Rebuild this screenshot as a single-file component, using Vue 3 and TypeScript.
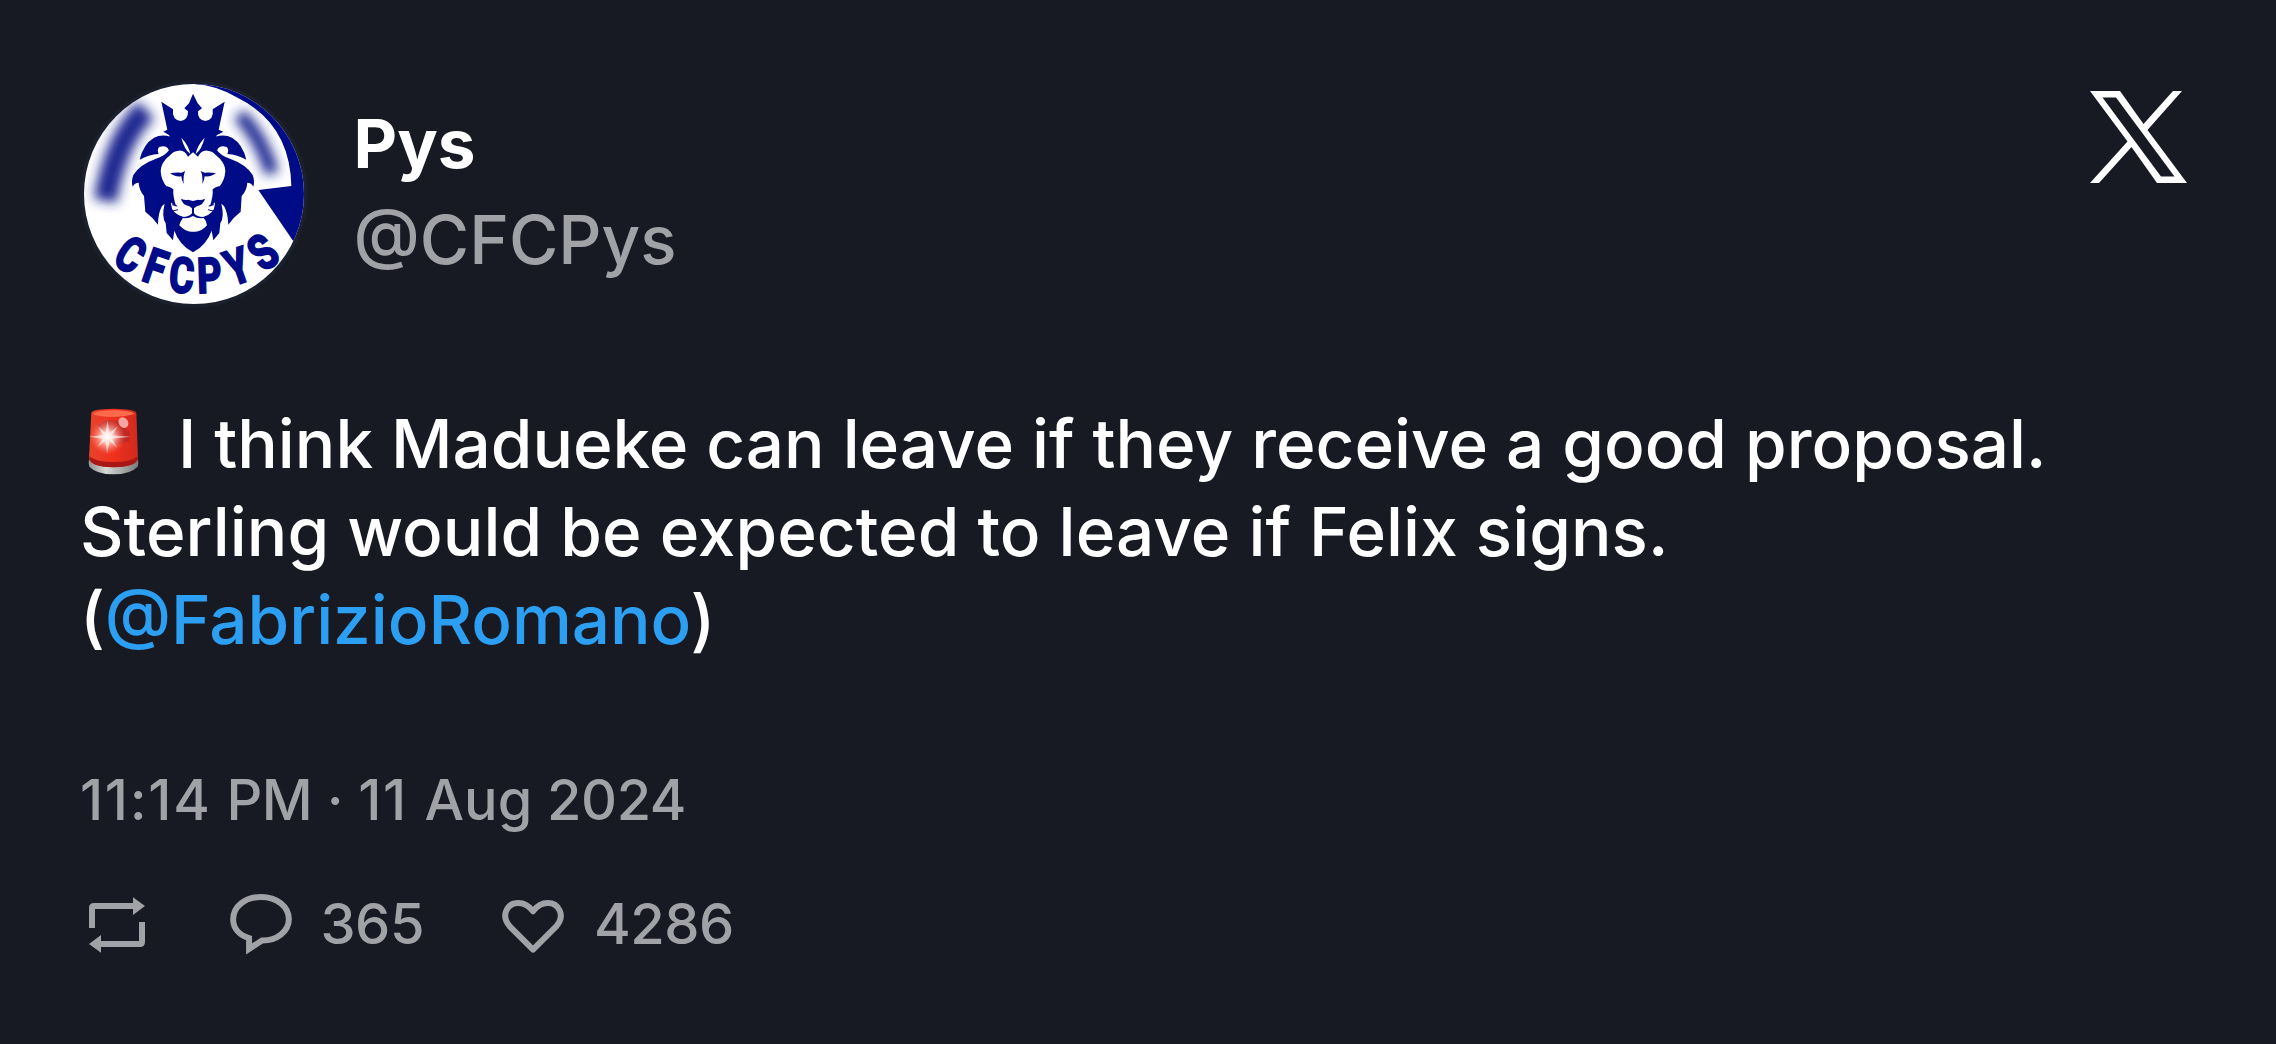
<script setup lang="ts">
interface BadgeLetter { ch: string; x: number; y: number; rot: number }

const badge: BadgeLetter[] = [
  { ch: 'C', x: 182, y: 553, rot: 33 },
  { ch: 'F', x: 257, y: 590, rot: 19 },
  { ch: 'C', x: 335, y: 615, rot: 5 },
  { ch: 'P', x: 418, y: 616, rot: -2 },
  { ch: 'Y', x: 502, y: 588, rot: -19 },
  { ch: 'S', x: 578, y: 546, rot: -36 },
]
</script>

<template>
  <article class="card">
    <header class="head">
      <svg class="avatar" viewBox="30 30 684 684">
        <defs>
          <clipPath id="disc"><circle cx="372" cy="372" r="330" /></clipPath>
          <filter id="soft" x="-60%" y="-50%" width="220%" height="200%"><feGaussianBlur stdDeviation="17" /></filter>
        </defs>
        <circle cx="372" cy="372" r="341" fill="#1a212c" />
        <g clip-path="url(#disc)">
          <rect x="30" y="30" width="684" height="684" fill="#fff" />
          <path d="M372 42 Q440 46 500 82 Q660 160 664 348 L565 360 L670 514 L720 500 L720 30 Z" fill="#000b88" />
          <g filter="url(#soft)" fill="none" stroke="#1c2890">
            <path d="M228 120 Q138 205 106 392" stroke-width="70" />
            <path d="M508 134 Q575 205 606 310" stroke-width="42" />
          </g>
          <g fill="#000b88">
            <!-- crown and brow -->
            <path d="M274 95 L309 118 Q305 150 332 153 Q355 150 354 124 L343 115 L357 100 L369 71 L383 100 L396 115 L384 124 Q382 150 406 153 Q432 150 428 118 L464 95 L446 179 L460 185 L440 196 L430 240 L308 240 L298 196 L280 185 L292 179 Z" />
            <!-- ears -->
            <path d="M209 269 Q220 222 252 203 Q274 192 302 200 L308 238 L296 240 Q290 224 268 231 Q260 238 266 252 Q236 254 209 269 Z" />
            <path d="M529 269 Q518 222 486 203 Q464 192 436 200 L430 238 L442 240 Q448 224 470 231 Q478 238 472 252 Q502 254 529 269 Z" />
            <!-- mane -->
            <path d="M300 236 Q288 256 258 266 Q208 284 190 315 Q183 334 188 350 Q194 338 206 338 Q208 362 222 378 L226 425 Q246 440 264 464 Q264 430 276 408 L284 401 Q274 440 287 460 L290 489 L309 511 L313 482 Q328 525 369 547 Q410 525 425 482 L430 511 L448 489 L451 460 Q464 440 454 401 L462 408 Q474 430 475 464 Q492 440 512 425 L515 378 Q530 362 532 338 Q544 338 550 350 Q555 334 548 315 Q530 284 480 266 Q450 256 438 236 L369 225 Z" />
          </g>
          <g fill="#fff">
            <!-- face -->
            <path d="M354 260 Q344 240 326 242 Q310 243 300 256 Q272 278 272 304 Q274 334 292 352 L303 360 L310 386 L303 402 Q305 432 341 441 Q329 458 328 466 Q350 489 369 485 Q391 489 411 466 Q408 450 399 441 Q433 432 435 402 L428 386 L435 360 L446 352 Q464 334 466 304 Q466 278 438 256 Q428 243 412 242 Q394 240 384 260 L369 247 Z" />
            <path d="M334 203 Q356 226 361 252 Q343 239 334 203 Z M404 203 Q382 226 377 252 Q395 239 404 203 Z" />
          </g>
          <g fill="#000b88">
            <!-- cheeks -->
            <path d="M290 348 Q304 352 310 358 Q308 380 319 410 Q304 402 298 386 Z M448 348 Q434 352 428 358 Q430 380 419 410 Q434 402 440 386 Z" />
            <!-- eyes -->
            <path d="M300 310 Q318 306 334 308 L346 303 Q339 314 341 342 Q335 332 334 319 Q314 321 300 310 Z M438 310 Q420 306 404 308 L392 303 Q399 314 397 342 Q403 332 404 319 Q424 321 438 310 Z" />
            <!-- nose and muzzle -->
            <path d="M333 386 Q346 392 354 389 L369 393 L384 389 Q392 392 405 386 Q402 403 380 409 L372 415 V430 Q385 445 412 440 Q390 451 369 438 Q348 451 326 440 Q353 445 366 430 V415 L358 409 Q336 403 333 386 Z" />
          </g>
          <path d="M306 404 L322 408 M308 423 L324 419 M432 404 L416 408 M430 423 L414 419" stroke="#000b88" stroke-width="3" />
          <text
            v-for="(l, i) in badge"
            :key="i"
            class="letter"
            :transform="`translate(${l.x} ${l.y}) rotate(${l.rot}) scale(.77 1)`"
            y="52"
          >{{ l.ch }}</text>
        </g>
      </svg>
      <div class="who">
        <div class="name">Pys</div>
        <div class="handle">@CFCPys</div>
      </div>
      <svg class="xlogo" viewBox="0 0 97 92">
        <path fill="#fff" fill-rule="evenodd" d="M0 0 H30 L53.500 33 L83 0 H92 L57.500 39 L97 92 H67 L41.500 56 L9 92 H0 L37.500 50.500 Z M12.500 6.500 L71 85.500 H84.500 L26 6.500 Z" />
      </svg>
    </header>

    <p class="body">
      <svg class="siren" viewBox="0 0 154 200">
        <defs>
          <linearGradient id="glass" x1="0" x2="1"><stop offset="0" stop-color="#e8432c" /><stop offset=".5" stop-color="#f0301c" /><stop offset="1" stop-color="#d02a1e" /></linearGradient>
          <linearGradient id="base" x1="0" x2="1"><stop offset="0" stop-color="#8f9392" /><stop offset=".35" stop-color="#d6d8d6" /><stop offset="1" stop-color="#777a7a" /></linearGradient>
          <radialGradient id="glow"><stop offset="0" stop-color="#fff" /><stop offset=".35" stop-color="#ffd5cc" stop-opacity=".85" /><stop offset="1" stop-color="#ff7765" stop-opacity="0" /></radialGradient>
        </defs>
        <path d="M4 148 Q0 165 4 176 Q26 199 77 199 Q128 199 150 176 Q154 165 150 148 Z" fill="url(#base)" />
        <path d="M10 14 Q12 2 77 1 Q142 2 146 14 L151 152 Q146 176 77 178 Q8 176 3 152 Z" fill="url(#glass)" />
        <path d="M5 145 Q25 162 77 162 Q129 162 149 145 L151 153 Q142 177 77 178 Q12 177 3 153 Z" fill="#a81716" />
        <path d="M14 17 Q25 6 77 6 Q129 6 141 17 Q110 26 77 26 Q35 26 14 17 Z" fill="#ff6b4b" />
        <path d="M30 50 Q60 25 98 42 L126 72 L124 98 L92 108 Q50 110 30 50 Z" fill="#a8272a" opacity=".6" />
        <ellipse cx="107" cy="43" rx="14" ry="17" fill="#f6a4a0" transform="rotate(-35 107 43)" />
        <circle cx="59" cy="86" r="54" fill="url(#glow)" />
        <path d="M59 36 L65 74 L90 54 L73 81 L128 86 L73 92 L88 119 L65 98 L58 137 L52 98 L28 117 L45 92 L3 86 L45 80 L31 55 L53 74 Z" fill="#fff" opacity=".6" />
      </svg><span class="l1">I think Madueke can leave if they receive a good proposal.</span><br />
      <span class="l2">Sterling would be expected to leave if Felix signs.</span><br />
      <span>(<span class="mention">@FabrizioRomano</span>)</span>
    </p>

    <div class="time"><span class="ones">11:14</span> <span class="pm">PM ·</span> <span class="ones">11 </span><span>Aug </span><span class="pm">2024</span></div>

    <footer class="stats">
      <svg class="rt" viewBox="0 0 168 166" fill="#a1a2a6">
        <path d="M0 92 V32 Q0 17 15 17 H132 V0 L168 26 L132 53 V35 H18 V92 Z" />
        <path d="M168 74 V134 Q168 149 153 149 H36 V166 L0 140 L36 113 V131 H150 V74 Z" />
      </svg>
      <svg class="reply" viewBox="0 0 186 187">
        <path d="M57 133 C28 124 9 104 9 76 C9 38 45 9 93 9 C141 9 177 38 177 76 C177 113 140 141 96 140 L57 166 Z" fill="none" stroke="#a1a2a6" stroke-width="18" />
      </svg>
      <span class="n1">365</span>
      <svg class="heart" viewBox="0 0 186 162">
        <path d="M93 149 L24 80 C-6 46 16 9 49 9 Q75 9 93 34 Q111 9 137 9 C170 9 192 46 162 80 Z" fill="none" stroke="#a1a2a6" stroke-width="18" stroke-linejoin="round" />
      </svg>
      <span class="n2">4286</span>
    </footer>
  </article>
</template>

<style>
body { margin: 0; background: #181a23; }
</style>

<style scoped>
.card {
  box-sizing: border-box;
  width: 2276px;
  height: 1044px;
  padding: 80px 89px 0 80px;
  overflow: hidden;
  background: #181a23;
  color: #fff;
  font-family: Inter, "Liberation Sans", sans-serif;
  font-weight: 500;
  white-space: nowrap;
}
.head { display: flex; height: 228px; }
.avatar { width: 228px; height: 228px; flex: none; }
.letter {
  font: 700 146px Roboto, "Liberation Sans", sans-serif;
  text-anchor: middle;
  fill: #000b88;
  stroke: #000b88;
  stroke-width: 7px;
}
.who { margin-left: 45.600px; padding-top: 16px; font-size: 67.4px; line-height: 95.500px; }
.name { font-weight: 700; }
.handle { color: #a1a2a6; }
.xlogo { width: 97px; height: 92px; margin: 11px 0 0 auto; }
.body { margin: 92px 0 0; font-size: 67.4px; line-height: 88px; }
.siren { width: 51px; height: 67px; margin: 0 0 -7px 8px; vertical-align: baseline; }
.l1 { margin-left: 39px; }
.l2 { letter-spacing: .06px; }
.mention { color: #2d9ff3; }
.time { margin-top: 96px; color: #a1a2a6; font-size: 55.8px; line-height: 80px; white-space: pre; }
.ones { letter-spacing: 1.7px; }
.pm { letter-spacing: -.4px; }
.stats { display: flex; align-items: flex-start; height: 80px; margin-top: 44px; color: #a1a2a6; font-size: 56px; line-height: 80px; letter-spacing: -.5px; }
.rt { width: 56px; height: 56px; margin: 13px 0 0 9px; }
.reply { width: 62px; height: 62px; margin: 10px 0 0 85px; }
.n1 { margin-left: 28.500px; }
.heart { width: 62px; height: 54px; margin: 16px 0 0 78px; }
.n2 { margin-left: 30px; }
</style>
